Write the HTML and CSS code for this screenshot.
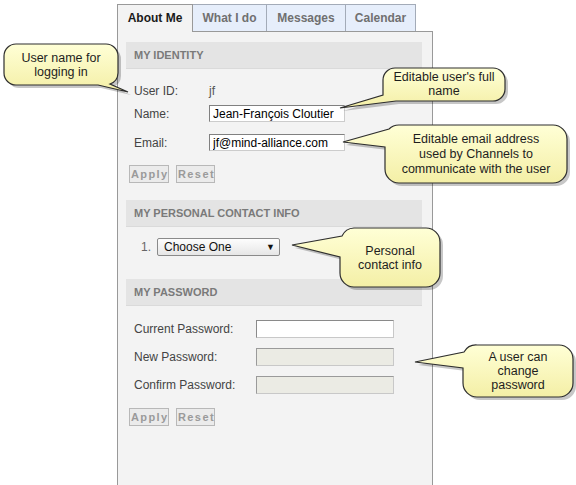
FILE: index.html
```html
<!DOCTYPE html>
<html lang="en">
<head>
<meta charset="UTF-8">
<title>About Me</title>
<link rel="stylesheet" href="styles.css">
</head>
<body>
<div class="page">
    <div class="profile">
        <div class="tabs">
            <div class="tab active">About Me</div>
            <div class="tab w-what">What I do</div>
            <div class="tab w-msg">Messages</div>
            <div class="tab w-cal">Calendar</div>
        </div>
        <div class="panel">
            <div class="section-head">My identity</div>
            <div class="field first">
                <span class="label">User ID:</span>
                <span class="value">jf</span>
            </div>
            <div class="field second">
                <label class="label">Name:</label>
                <input class="text" type="text" value="Jean-François Cloutier">
            </div>
            <div class="field third">
                <label class="label">Email:</label>
                <input class="text" type="text" value="jf@mind-alliance.com">
            </div>
            <div class="buttons id-buttons">
                <button class="btn apply">Apply</button>
                <button class="btn reset">Reset</button>
            </div>

            <div class="section-head contact-head">My personal contact info</div>
            <div class="contact-row">
                <span class="num">1.</span>
                <div class="select">Choose One <span class="arrow">&#9660;</span></div>
            </div>

            <div class="section-head password-head">My password</div>
            <div class="pw-row first-pw">
                <label class="pw-label">Current Password:</label>
                <input class="pw" type="password">
            </div>
            <div class="pw-row">
                <label class="pw-label">New Password:</label>
                <input class="pw" type="password" disabled>
            </div>
            <div class="pw-row">
                <label class="pw-label">Confirm Password:</label>
                <input class="pw" type="password" disabled>
            </div>
            <div class="buttons pw-buttons">
                <button class="btn apply">Apply</button>
                <button class="btn reset">Reset</button>
            </div>
        </div>
    </div>

    <!-- callouts laid over the screen -->
    <svg class="notes" width="576" height="485" viewBox="0 0 576 485">
        <defs>
            <linearGradient id="yellow" x1="0" y1="0" x2="0" y2="1">
                <stop offset="0" stop-color="#ffffd6"/>
                <stop offset="1" stop-color="#f4efa6"/>
            </linearGradient>
            <path id="n1" d="M16,44 H106 A12,12 0 0 1 118,56 V73 A12,12 0 0 1 110,84 L128,92 L98,85 H16 A12,12 0 0 1 4,73 V56 A12,12 0 0 1 16,44 Z"/>
            <path id="n2" d="M395,68 H493 A12,12 0 0 1 505,80 V89 A12,12 0 0 1 493,101 H396 L340,108 L383,95 V80 A12,12 0 0 1 395,68 Z"/>
            <path id="n3" d="M399,125 H553 A14,14 0 0 1 567,139 V169 A14,14 0 0 1 553,183 H399 A14,14 0 0 1 385,169 V147 L343,142 L389,129 A14,14 0 0 1 399,125 Z"/>
            <path id="n4" d="M354,228 H426 A14,14 0 0 1 440,242 V273 A14,14 0 0 1 426,287 H354 A14,14 0 0 1 340,273 V257 L292,245 L342,236 A14,14 0 0 1 354,228 Z"/>
            <path id="n5" d="M477,345 H559 A14,14 0 0 1 573,359 V383 A14,14 0 0 1 559,397 H477 A14,14 0 0 1 463,383 V368 L415,362 L464,352 A14,14 0 0 1 477,345 Z"/>
        </defs>
        <g class="shadow" transform="translate(3,3)">
            <use href="#n1"/><use href="#n2"/><use href="#n3"/><use href="#n4"/><use href="#n5"/>
        </g>
        <g class="bubble">
            <use href="#n1"/><use href="#n2"/><use href="#n3"/><use href="#n4"/><use href="#n5"/>
        </g>
    </svg>
    <div class="note-text t1">User name for<br>logging in</div>
    <div class="note-text t2">Editable user's full<br>name</div>
    <div class="note-text t3">Editable email address<br>used by Channels to<br>communicate with the user</div>
    <div class="note-text t4">Personal<br>contact info</div>
    <div class="note-text t5">A user can<br>change<br>password</div>
</div>
</body>
</html>
```

FILE: styles.css
```css
body {
    margin: 0;
    padding: 0;
    background: #fff;
    font-family: "Liberation Sans", Arial, sans-serif;
    font-size: 12px;
    color: #444;
}

.page {
    position: relative;
    width: 576px;
    height: 485px;
    overflow: hidden;
}

.profile {
    margin: 4px 0 0 117px;
    width: 316px;
}

/* tabs */
.tabs {
    display: flex;
    height: 27px;
}

.tab {
    box-sizing: border-box;
    height: 27px;
    border: 1px solid #a3abb8;
    border-left: none;
    border-bottom: none;
    background: #e6eefb;
    color: #707070;
    font-weight: bold;
    text-align: center;
    line-height: 26px;
}

.tab.active {
    position: relative;
    z-index: 1;
    width: 76px;
    height: 28px;
    margin-bottom: -1px;
    border-left: 1px solid #999;
    border-color: #999;
    background: #f3f3f3;
    color: #1a1a1a;
}

.w-what { width: 74px; }
.w-msg { width: 79px; }
.w-cal { width: 70px; }

/* panel */
.panel {
    box-sizing: border-box;
    height: 460px;
    border: 1px solid #999;
    border-bottom: none;
    background: #f3f3f3;
    padding: 10px 10px 0 8px;
}

.section-head {
    height: 26px;
    line-height: 26px;
    background: #e4e4e4;
    border-bottom: 1px solid #dadada;
    padding-left: 8px;
    color: #7a7a7a;
    font-size: 11px;
    font-weight: bold;
    text-transform: uppercase;
}

.field {
    display: flex;
    align-items: center;
    height: 17px;
    padding-left: 8px;
}

.field.first { margin-top: 13px; }
.field.second { margin-top: 6px; }
.field.third { margin-top: 12px; }

.label {
    width: 75px;
}

.value {
    color: #555;
}

.text {
    box-sizing: border-box;
    width: 136px;
    height: 17px;
    margin: 0;
    padding: 0 3px;
    border: 1px solid #ccc;
    border-top-color: #808080;
    border-left-color: #808080;
    background: #fff;
    font-family: "Liberation Sans", Arial, sans-serif;
    font-size: 12px;
    color: #000;
}

.buttons {
    display: flex;
    gap: 7px;
    padding-left: 3px;
}

.id-buttons { margin-top: 14px; }
.pw-buttons { margin-top: 14px; }

.btn {
    box-sizing: border-box;
    width: 40px;
    height: 18px;
    margin: 0;
    padding: 0 0 0 1px;
    border: 1px solid #b8b8b8;
    background: #ebebeb;
    color: #9a9a9a;
    font-family: "Liberation Sans", Arial, sans-serif;
    font-size: 11px;
    font-weight: bold;
    letter-spacing: 1.4px;
}

.btn.reset { width: 39px; }

.contact-head { margin-top: 17px; }

.contact-row {
    display: flex;
    align-items: center;
    margin-top: 11px;
    padding-left: 15px;
}

.num {
    width: 16px;
    color: #666;
}

.select {
    box-sizing: border-box;
    display: flex;
    align-items: center;
    justify-content: space-between;
    width: 123px;
    height: 18px;
    padding: 0 4px 0 6px;
    border: 1px solid #8a8a8a;
    border-radius: 2px;
    background: linear-gradient(#fdfdfd, #e6e6e6);
    color: #111;
}

.arrow {
    font-size: 9px;
    color: #111;
}

.password-head { margin-top: 23px; }

.pw-row {
    display: flex;
    align-items: center;
    height: 18px;
    margin-top: 10px;
    padding-left: 8px;
}

.pw-row.first-pw { margin-top: 14px; }

.pw-label {
    width: 122px;
}

.pw {
    box-sizing: border-box;
    width: 138px;
    height: 18px;
    margin: 0;
    border: 1px solid #c8c8c8;
    border-top-color: #8a8a8a;
    border-left-color: #8a8a8a;
    background: #fff;
}

.pw:disabled {
    background: #ebebe4;
    border-color: #c8c8c8;
    border-top-color: #9a9a9a;
    border-left-color: #9a9a9a;
}

/* callouts */
.notes {
    position: absolute;
    left: 0;
    top: 0;
}

.shadow use {
    fill: #000;
    opacity: 0.22;
}

.bubble use {
    fill: url(#yellow);
    stroke: #2e2e2e;
    stroke-width: 1.2;
}

.note-text {
    position: absolute;
    display: flex;
    align-items: center;
    justify-content: center;
    text-align: center;
    color: #1e1e1e;
    font-size: 12.5px;
    line-height: 14px;
}

.t1 { left: 4px; top: 44px; width: 114px; height: 41px; }
.t2 { left: 383px; top: 67px; width: 122px; height: 34px; }
.t3 { left: 385px; top: 125px; width: 182px; height: 58px; line-height: 15px; }
.t4 { left: 340px; top: 228px; width: 100px; height: 59px; }
.t5 { left: 463px; top: 345px; width: 110px; height: 52px; }
```
